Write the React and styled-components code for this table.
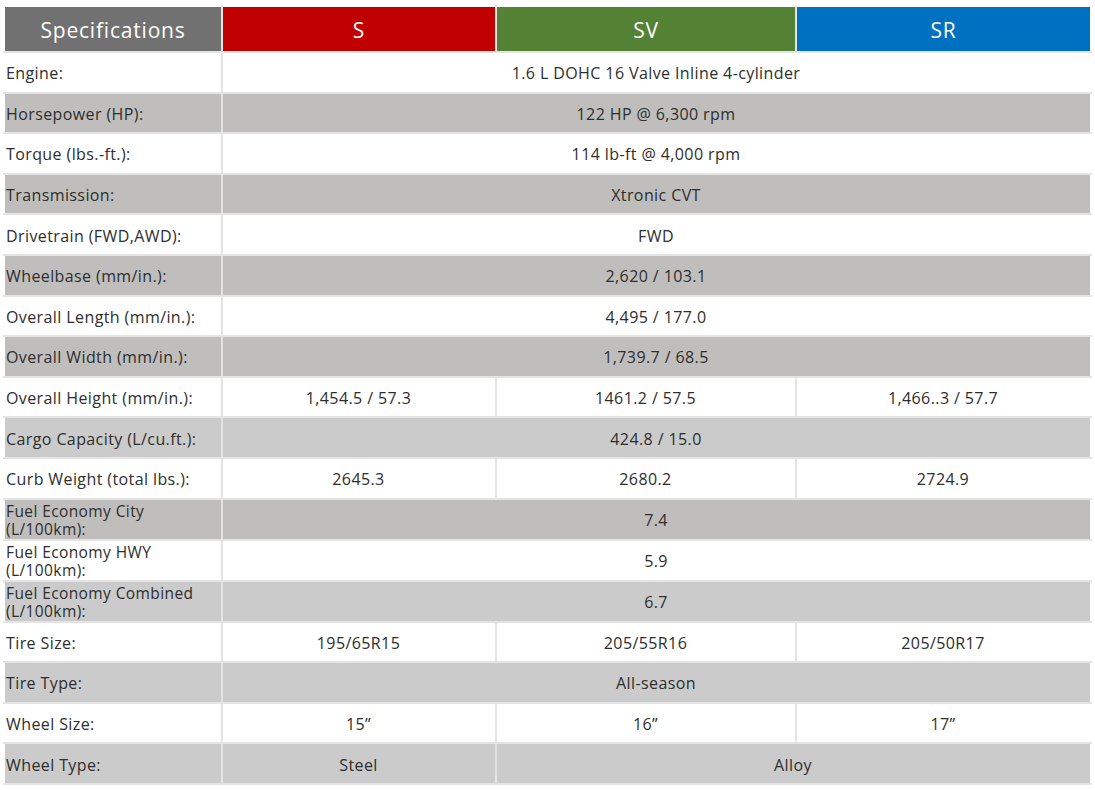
import React from "react";
import styled, { createGlobalStyle } from "styled-components";

const GlobalStyle = createGlobalStyle`
  body {
    margin: 0;
    background: #ffffff;
    font-family: "Open Sans", "Liberation Sans", sans-serif;
  }
`;

const trims = [
  { name: "S", color: "#c00000" },
  { name: "SV", color: "#548235" },
  { name: "SR", color: "#0070c0" },
];

const columnWidths = [218, 274, 300, 295];

// each row: label, shade ("none" | "dark" | "light"), values (one spanning value or three)
const rows = [
  { label: "Engine:", shade: "none", values: ["1.6 L DOHC 16 Valve Inline 4-cylinder"] },
  { label: "Horsepower (HP):", shade: "dark", values: ["122 HP @ 6,300 rpm"] },
  { label: "Torque (lbs.-ft.):", shade: "none", values: ["114 lb-ft @ 4,000 rpm"] },
  { label: "Transmission:", shade: "dark", values: ["Xtronic CVT"] },
  { label: "Drivetrain (FWD,AWD):", shade: "none", values: ["FWD"] },
  { label: "Wheelbase (mm/in.):", shade: "dark", values: ["2,620 / 103.1"] },
  { label: "Overall Length (mm/in.):", shade: "none", values: ["4,495 / 177.0"] },
  { label: "Overall Width (mm/in.):", shade: "dark", values: ["1,739.7 / 68.5"] },
  { label: "Overall Height (mm/in.):", shade: "none", values: ["1,454.5 / 57.3", "1461.2 / 57.5", "1,466..3 / 57.7"] },
  { label: "Cargo Capacity (L/cu.ft.):", shade: "light", values: ["424.8 / 15.0"] },
  { label: "Curb Weight (total lbs.):", shade: "none", values: ["2645.3", "2680.2", "2724.9"] },
  { label: ["Fuel Economy City", "(L/100km):"], shade: "dark", values: ["7.4"] },
  { label: ["Fuel Economy HWY", "(L/100km):"], shade: "none", values: ["5.9"] },
  { label: ["Fuel Economy Combined", "(L/100km):"], shade: "light", values: ["6.7"] },
  { label: "Tire Size:", shade: "none", values: ["195/65R15", "205/55R16", "205/50R17"] },
  { label: "Tire Type:", shade: "light", values: ["All-season"] },
  { label: "Wheel Size:", shade: "none", values: ["15\u201D", "16\u201D", "17\u201D"] },
  { label: "Wheel Type:", shade: "light", values: ["Steel", { text: "Alloy", span: 2 }] },
];

const shades = {
  none: "#ffffff",
  dark: "#bfbebc",
  light: "#cbcbcb",
};

export default function App() {
  return (
    <>
      <GlobalStyle />
      <Page>
        <SpecTable>
          <colgroup>
            {columnWidths.map((w, i) => (
              <Col key={i} $width={w} />
            ))}
          </colgroup>
          <thead>
            <tr>
              <HeadCell $bg="#717171">Specifications</HeadCell>
              {trims.map((t) => (
                <HeadCell key={t.name} $bg={t.color}>
                  {t.name}
                </HeadCell>
              ))}
            </tr>
          </thead>
          <tbody>
            {rows.map((row, i) => (
              <Row key={i} $bg={shades[row.shade]}>
                <LabelCell>
                  {Array.isArray(row.label)
                    ? row.label.map((l, j) => <LabelLine key={j}>{l}</LabelLine>)
                    : row.label}
                </LabelCell>
                {row.values.map((v, j) => {
                  const span =
                    typeof v === "object" ? v.span : row.values.length === 1 ? 3 : 1;
                  const text = typeof v === "object" ? v.text : v;
                  return (
                    <ValueCell key={j} colSpan={span}>
                      {text}
                    </ValueCell>
                  );
                })}
              </Row>
            ))}
          </tbody>
        </SpecTable>
      </Page>
    </>
  );
}

const Page = styled.div`
  padding: 5px 3px 4px 3px;
`;

const SpecTable = styled.table`
  width: 1089px;
  border-collapse: collapse;
  table-layout: fixed;
  color: #2e2e2e;
`;

const Col = styled.col`
  width: ${(p) => p.$width}px;
`;

const HeadCell = styled.th`
  background: ${(p) => p.$bg};
  color: #ffffff;
  font-size: 21px;
  font-weight: 400;
  letter-spacing: 0.8px;
  height: 42px;
  padding: 2px 0 0 0;
  border: 2px solid #e4e4e4;
  border-top-color: #ffffff;
  text-align: center;
  vertical-align: middle;
  &:first-child {
    border-left-color: #ffffff;
  }
  &:last-child {
    border-right-color: #ffffff;
  }
`;

const Row = styled.tr`
  background: ${(p) => p.$bg};
`;

const cellBase = `
  height: 35.6px;
  padding: 3px 2px 0 1px;
  border: 2px solid #e4e4e4;
  font-size: 16px;
  letter-spacing: 0.4px;
  line-height: 19px;
  vertical-align: middle;
`;

const LabelCell = styled.td`
  ${cellBase}
  text-align: left;
  border-left-color: #ffffff;
  white-space: nowrap;
`;

const LabelLine = styled.span`
  display: block;
  font-size: 15.5px;
  line-height: 19px;
  margin-top: -1px;
`;

const ValueCell = styled.td`
  ${cellBase}
  text-align: center;
  &:last-child {
    border-right-color: #ffffff;
  }
`;
